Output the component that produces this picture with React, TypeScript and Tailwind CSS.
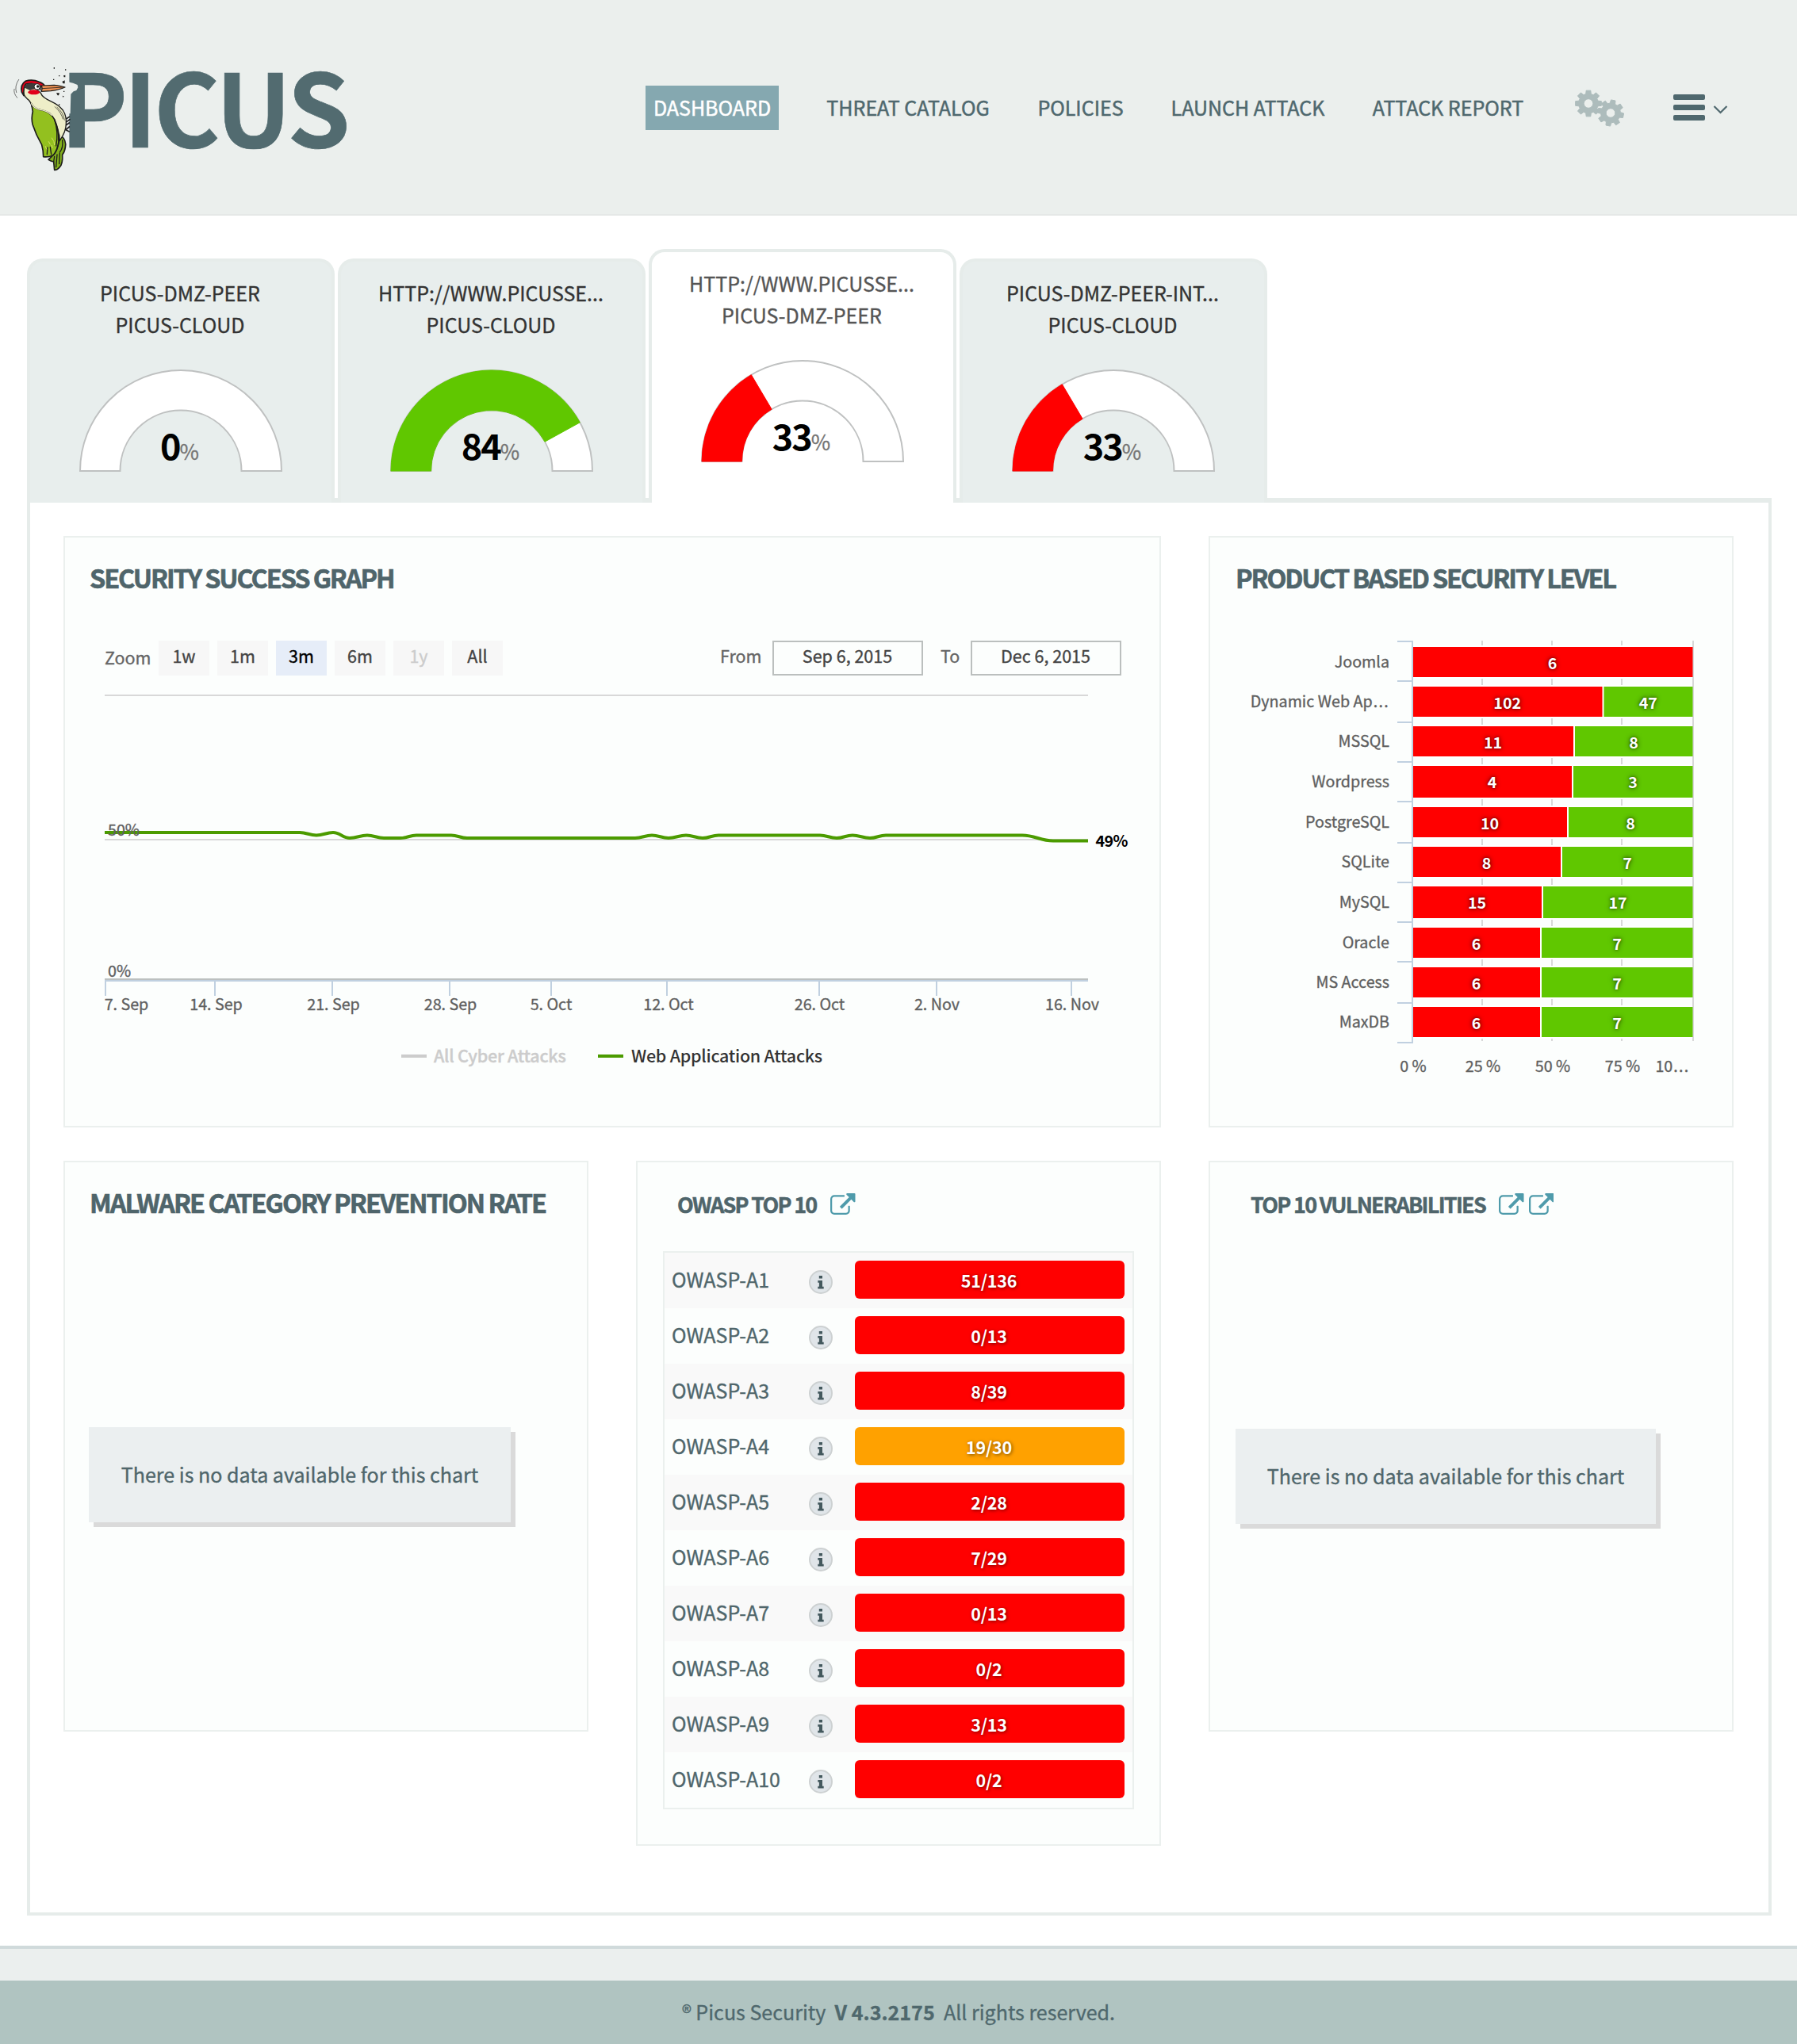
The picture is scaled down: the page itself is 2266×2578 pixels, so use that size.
import React from "react";

const FONT = "font-['Noto_Sans_CJK_SC','Noto_Sans',sans-serif]";

/* ---------- Logo ---------- */

function Logo() {
  return (
    <svg className="mt-[60px] h-[220px] w-[460px] shrink-0 overflow-visible" viewBox="0 0 1380 660">
      <text
        x="229 468 582 816 1087"
        y="378"
        fontSize="382"
        fontWeight="700"
        fill="#526b70"
        stroke="#526b70"
        strokeWidth="2"
      >
        PICUS
      </text>
      {/* bite taken out of the P */}
      <path d="M255 128 L266 132 L276 134 L293 141 L295 151 L289 162 L278 166 L268 176 L266 250 L255 250Z" fill="#ebefed" />
      <g strokeLinecap="round" strokeLinejoin="round">
        {/* motion lines */}
        <path d="M71 121 Q54 145 62 170 M54 157 Q50 172 65 190" fill="none" stroke="#333" strokeWidth="2" />
        {/* claws */}
        <path d="M250 270 L262 262 M248 284 L264 272 M240 300 L262 285 M236 296 L250 310 L262 300 M246 310 L262 318" fill="none" stroke="#1d1d1b" strokeWidth="5" />
        {/* tail */}
        <path d="M232 335 Q252 350 247 378 Q244 396 236 405 Q238 440 226 452 Q216 464 206 463 L203 432 Q192 430 183 424 Q196 414 204 402Z" fill="#82b01c" stroke="#1d1d1b" strokeWidth="5" />
        <path d="M216 405 L212 452 M226 400 L224 440 M236 350 Q240 380 226 396 M203 432 L206 412" fill="none" stroke="#1d1d1b" strokeWidth="4" />
        {/* belly and neck */}
        <path d="M88 150 Q84 178 102 193 Q117 203 121 225 L150 236 Q190 242 205 275 Q222 305 226 352 Q250 318 250 288 Q252 258 238 237 Q222 217 196 205 Q160 190 154 172 L130 150Z" fill="#eeeec8" stroke="#1d1d1b" strokeWidth="4" />
        <path d="M216 226 Q240 246 244 274 M208 224 Q232 246 238 270" fill="none" stroke="#1d1d1b" strokeWidth="2" />
        {/* wing */}
        <path d="M119 212 Q128 230 150 235 Q190 240 206 272 Q222 308 222 356 Q216 395 200 408 Q182 416 164 413 Q164 388 158 368 Q136 330 123 290 Q118 265 124 242Z" fill="#93c01f" stroke="#1d1d1b" strokeWidth="5" />
        <path d="M119 212 Q128 230 150 235 Q178 238 196 256" fill="none" stroke="#eeeec8" strokeWidth="4" />
        <path d="M206 272 Q222 320 212 372 M224 330 Q226 372 206 402 M180 378 L178 404 M190 376 L194 404" fill="none" stroke="#1d1d1b" strokeWidth="4" />
        <path d="M196 342 L202 352 M184 356 L190 366 M204 356 L206 368 M172 374 L176 384 M196 370 L198 380" fill="none" stroke="#d8e26a" strokeWidth="3" />
        {/* head */}
        <path d="M82 168 Q76 140 96 127 Q122 118 148 130 Q164 136 168 143 L154 150 L120 136 L98 138 Q88 150 90 182Z" fill="#e2001a" stroke="#1d1d1b" strokeWidth="5" />
        <path d="M90 150 Q96 138 112 136 Q136 132 154 142 L156 162 Q130 152 114 162 Q100 156 90 150Z" fill="#3c3c3b" />
        <ellipse cx="128" cy="169" rx="22" ry="9" fill="#e2001a" />
        <circle cx="140" cy="148" r="11" fill="#fff" stroke="#1d1d1b" strokeWidth="3" />
        <circle cx="143" cy="147" r="5" fill="#1d1d1b" />
        {/* beak */}
        <path d="M157 144 L205 142 Q232 145 246 150 Q225 160 192 164 L156 166 Q162 155 157 144Z" fill="#f39455" stroke="#1d1d1b" strokeWidth="3.5" />
        <path d="M158 155 L240 150" stroke="#1d1d1b" strokeWidth="2.5" />
      </g>
      {/* splinters */}
      <path d="M203 75h4v5h-4zM246 82h4v4h-4zM222 105h4v4h-4zM240 106l7-2v8h-5zM201 119h4v4h-4zM235 129l10-5v12h-6zM240 164h4v4h-4zM213 172h12l-3 9h-4zM236 182l6 2-3 5zM222 214h4v4h-4z" fill="#1d1d1b" />
    </svg>
  );
}

/* ---------- Header ---------- */

function gearPath(cx: number, cy: number, turn: number) {
  const teeth = 8;
  const outer = 16.6;
  const inner = 12.4;
  const pts: string[] = [];
  for (let i = 0; i < teeth; i++) {
    const a = turn + (i * 2 * Math.PI) / teeth;
    const at = (r: number, d: number) =>
      `${(cx + r * Math.cos(a + d)).toFixed(2)} ${(cy + r * Math.sin(a + d)).toFixed(2)}`;
    pts.push(at(inner, -0.27), at(outer, -0.17), at(outer, 0.17), at(inner, 0.27));
  }
  const r = 5.8;
  return `M${pts.join("L")}Z M${cx - r} ${cy}a${r} ${r} 0 1 0 ${2 * r} 0a${r} ${r} 0 1 0 ${-2 * r} 0Z`;
}

function Cogs() {
  return (
    <svg className="ml-[54px] h-[50px] w-[64px]" viewBox="0 0 64 50">
      <path d={gearPath(17, 19.5, 0)} fill="#adbcbc" fillRule="evenodd" stroke="#adbcbc" strokeWidth="1" strokeLinejoin="round" />
      <path d={gearPath(45, 31.5, 0.2)} fill="#adbcbc" fillRule="evenodd" stroke="#adbcbc" strokeWidth="1" strokeLinejoin="round" />
    </svg>
  );
}

function Header() {
  return (
    <header className="flex h-[272px] border-b-2 border-[#e5e8e7] bg-[#ebefed]">
      <Logo />
      <nav className="mt-[108px] ml-[354px] flex h-[56px] items-start text-[25px] leading-[54px] whitespace-nowrap text-[#4f686e] [-webkit-text-stroke:0.5px]">
        <a className="mr-[49px] h-[56px] w-[168px] bg-[#85a8b0] text-center text-white">DASHBOARD</a>
        <a className="mr-10 w-[227px] pl-px text-center">THREAT CATALOG</a>
        <a className="mr-10 w-[129px] text-center">POLICIES</a>
        <a className="mr-10 w-[213px] text-center">LAUNCH ATTACK</a>
        <a className="w-[212px] text-center">ATTACK REPORT</a>
        <div className="flex h-[56px] items-center">
          <Cogs />
          <svg className="ml-[60px] h-[36px] w-[70px]" viewBox="0 0 70 36">
            <g fill="#4f686e">
              <rect x="0" y="1" width="40" height="7" rx="2" />
              <rect x="0" y="14" width="40" height="7" rx="2" />
              <rect x="0" y="27" width="40" height="7" rx="2" />
            </g>
            <path d="M51.5 16 L59.5 24 L67.5 16" fill="none" stroke="#4f686e" strokeWidth="2.2" />
          </svg>
        </div>
      </nav>
    </header>
  );
}

/* ---------- Peer tabs ---------- */

function ring(value: number) {
  const R = 127;
  const r = 76.5;
  const a = Math.PI * (1 - value / 100);
  const p = (q: number) => `${(130 + q * Math.cos(a)).toFixed(2)} ${(129 - q * Math.sin(a)).toFixed(2)}`;
  return `M3 129 A${R} ${R} 0 0 1 ${p(R)} L${p(r)} A${r} ${r} 0 0 0 53.5 129Z`;
}

function Gauge({ value, color }: { value: number; color: string }) {
  return (
    <svg className="mt-9 h-[132px] w-[260px]" viewBox="0 0 260 132">
      <path d={ring(100)} fill="#fff" stroke="#bfc1c1" strokeWidth="2" />
      {value > 0 && <path d={ring(value)} fill={color} stroke={color} strokeWidth="1" />}
      <text x="128.5" y="115" textAnchor="middle" fontWeight="700" fontSize="45" letterSpacing="-2" fill="#000">
        {value}
        <tspan fontWeight="400" fontSize="26.5" letterSpacing="0" fill="#757575" stroke="#757575" strokeWidth="0.3">
          %
        </tspan>
      </text>
    </svg>
  );
}

const peers = [
  { top: "PICUS-DMZ-PEER", bottom: "PICUS-CLOUD", value: 0, color: "#fff", active: false },
  { top: "HTTP://WWW.PICUSSE...", bottom: "PICUS-CLOUD", value: 84, color: "#60c700", active: false },
  { top: "HTTP://WWW.PICUSSE...", bottom: "PICUS-DMZ-PEER", value: 33, color: "#ff0000", active: true },
  { top: "PICUS-DMZ-PEER-INT...", bottom: "PICUS-CLOUD", value: 33, color: "#ff0000", active: false },
];

function Tabs() {
  return (
    <div className="relative z-10 -mb-[6px] flex h-[320px] items-end gap-1">
      {peers.map((p, i) => (
        <div
          key={i}
          className={
            "flex w-[388px] flex-col items-center rounded-t-[20px] border-x-4 border-t-4 border-[#e6ecea] pt-[19px] text-[25px] leading-[40px] whitespace-nowrap " +
            (p.active ? "h-[320px] bg-white text-[#555]" : "h-[308px] bg-[#e8eeed] text-[#333]")
          }
        >
          <span className="pr-[2px]">{p.top}</span>
          <span className="pr-[2px]">{p.bottom}</span>
          <Gauge value={p.value} color={p.color} />
        </div>
      ))}
    </div>
  );
}

/* ---------- Shared ---------- */

const panel = "border-2 border-[#ebf0ee] bg-[#fcfefd]";

function BigTitle({ children, className }: { children: React.ReactNode; className: string }) {
  return (
    <h2 className={"mt-[30px] ml-[31px] text-[32.5px] leading-[40px] font-bold whitespace-nowrap text-[#4f656b] [-webkit-text-stroke:0.6px] " + className}>
      {children}
    </h2>
  );
}

function ExternalLink() {
  return (
    <svg className="h-[27px] w-[31.5px]" viewBox="0 0 1792 1536">
      <path
        fill="#4f9bab"
        d="M1408 928v320q0 119-84.5 203.5t-203.5 84.5h-832q-119 0-203.5-84.5t-84.5-203.5v-832q0-119 84.5-203.5t203.5-84.5h704q14 0 23 9t9 23v64q0 14-9 23t-23 9h-704q-66 0-113 47t-47 113v832q0 66 47 113t113 47h832q66 0 113-47t47-113v-320q0-14 9-23t23-9h64q14 0 23 9t9 23zm384-864v512q0 26-19 45t-45 19-45-19l-176-176-652 652q-10 10-23 10t-23-10l-114-114q-10-10-10-23t10-23l652-652-176-176q-19-19-19-45t19-45 45-19h512q26 0 45 19t19 45z"
      />
    </svg>
  );
}

function NoData({ className }: { className: string }) {
  return (
    <div className={"h-[120px] bg-[#ebeff0] text-center text-[25.05px] leading-[118px] whitespace-nowrap text-[#4f666b] shadow-[6px_6px_0_#dadada] " + className}>
      There is no data available for this chart
    </div>
  );
}

/* ---------- Success graph ---------- */

const ranges = [
  { label: "1w", cls: "bg-[#f7f7f7] text-[#444]" },
  { label: "1m", cls: "bg-[#f7f7f7] text-[#444]" },
  { label: "3m", cls: "bg-[#e6edf8] text-black" },
  { label: "6m", cls: "bg-[#f7f7f7] text-[#444]" },
  { label: "1y", cls: "bg-[#f7f7f7] text-[#ccc]" },
  { label: "All", cls: "bg-[#f7f7f7] text-[#444]" },
];

const ticks: [number, string, number][] = [
  [133, "7. Sep", 159.5],
  [271, "14. Sep", 272.5],
  [419, "21. Sep", 420.5],
  [567, "28. Sep", 568],
  [695, "5. Oct", 695],
  [841, "12. Oct", 843],
  [1033, "26. Oct", 1033.5],
  [1181, "2. Nov", 1181.5],
  [1351, "16. Nov", 1352],
];

const curve: [number, number][] = [
  [132, 1050], [378, 1050], [399, 1053.5], [420, 1050], [441, 1057], [463, 1053.5], [484, 1057], [505, 1057],
  [525, 1053.5], [569, 1053.5], [589, 1057], [801, 1057], [822, 1053.5], [843, 1057], [865, 1053.5], [886, 1057],
  [906, 1053.5], [1034, 1053.5], [1055, 1057], [1075, 1053.5], [1097, 1057], [1117, 1053.5], [1289, 1053.5],
  [1328, 1060.5], [1372, 1060.5],
];

function curvePath() {
  let d = `M${curve[0][0]} ${curve[0][1]}`;
  for (let i = 1; i < curve.length; i++) {
    const [x0, y0] = curve[i - 1];
    const [x1, y1] = curve[i];
    const k = (x1 - x0) * 0.42;
    d += `C${x0 + k} ${y0} ${x1 - k} ${y1} ${x1} ${y1}`;
  }
  return d;
}

function SuccessGraph() {
  return (
    <section className={"col-span-2 h-[746px] " + panel}>
      <BigTitle className="h-[100px] tracking-[-2.1px]">SECURITY SUCCESS GRAPH</BigTitle>
      <div className="flex h-[44px] pl-[50px] text-[21.5px] leading-[38px] whitespace-nowrap">
        <span className="w-[68px] pt-[2px] text-[#666]">Zoom</span>
        <div className="flex gap-[10px]">
          {ranges.map((r) => (
            <span key={r.label} className={"h-[44px] w-[64px] text-center " + r.cls}>
              {r.label}
            </span>
          ))}
        </div>
        <span className="ml-[274px] w-[66px] text-[#666]">From</span>
        <span className="h-[44px] w-[190px] border-2 border-[#bbbfbe] pr-px text-center leading-[34px] text-[#444]">Sep 6, 2015</span>
        <span className="ml-[22px] w-[38px] text-[#666]">To</span>
        <span className="h-[44px] w-[190px] border-2 border-[#bbbfbe] pr-px text-center leading-[34px] text-[#444]">Dec 6, 2015</span>
      </div>
      <svg className="h-[568px] w-[1380px]" viewBox="82 852 1380 568">
        <g fill="#d8d8d8">
          <rect x="132" y="876" width="1240" height="2" />
          <rect x="132" y="1058" width="1240" height="2" />
        </g>
        <rect x="132" y="1234" width="1240" height="2" fill="#bcc0c0" />
        <rect x="132" y="1236" width="1240" height="2" fill="#c0d0e0" />
        <path d={curvePath()} fill="none" stroke="#4b9b00" strokeWidth="4" />
        {ticks.map(([x]) => (
          <rect key={x} x={x - 1} y="1238" width="2" height="18" fill="#c0d0e0" />
        ))}
        <g fontSize="19.7" fill="#606060" stroke="#606060" strokeWidth="0.35">
          {ticks.map(([, label, cx]) => (
            <text key={label} x={cx} y="1273.5" textAnchor="middle">
              {label}
            </text>
          ))}
          <text x="136" y="1054">50%</text>
          <text x="136" y="1231.5">0%</text>
        </g>
        <text x="1381.5" y="1067.8" fontSize="19.7" fontWeight="700" letterSpacing="-0.6" fill="#000">
          49%
        </text>
        <rect x="506" y="1330" width="32" height="4" fill="#ccc" />
        <rect x="754" y="1330" width="32" height="4" fill="#4b9b00" />
        <text x="547" y="1340" fontSize="21.5" fontWeight="500" letterSpacing="-0.25" fill="#ccc" stroke="#ccc" strokeWidth="0.4">
          All Cyber Attacks
        </text>
        <text x="796" y="1340" fontSize="21.5" fontWeight="500" letterSpacing="-0.27" fill="#333">
          Web Application Attacks
        </text>
      </svg>
    </section>
  );
}

/* ---------- Product based level ---------- */

const products = [
  { name: "Joomla", cut: false, bad: 6, good: 0, y: 816, h: 38, split: 2135 },
  { name: "Dynamic Web Ap", cut: true, bad: 102, good: 47, y: 866, h: 38, split: 2021.5 },
  { name: "MSSQL", cut: false, bad: 11, good: 8, y: 916, h: 38, split: 1985 },
  { name: "Wordpress", cut: false, bad: 4, good: 3, y: 966, h: 40, split: 1983 },
  { name: "PostgreSQL", cut: false, bad: 10, good: 8, y: 1018, h: 38, split: 1977 },
  { name: "SQLite", cut: false, bad: 8, good: 7, y: 1068, h: 38, split: 1969 },
  { name: "MySQL", cut: false, bad: 15, good: 17, y: 1118, h: 40, split: 1945 },
  { name: "Oracle", cut: false, bad: 6, good: 7, y: 1170, h: 38, split: 1943 },
  { name: "MS Access", cut: false, bad: 6, good: 7, y: 1220, h: 38, split: 1943 },
  { name: "MaxDB", cut: false, bad: 6, good: 7, y: 1270, h: 38, split: 1943 },
];

function Ellipsis() {
  return (
    <tspan dx="1" letterSpacing="1.3">
      ...
    </tspan>
  );
}

function ProductLevel() {
  return (
    <section className={"h-[746px] " + panel}>
      <BigTitle className="h-[100px] pl-px tracking-[-2.2px]">PRODUCT BASED SECURITY LEVEL</BigTitle>
      <svg className="h-[612px] w-[658px]" viewBox="1526 808 658 612">
        <g fill="#d8d8d8">
          <rect x="1868" y="808" width="2" height="505" />
          <rect x="1956" y="808" width="2" height="505" />
          <rect x="2044" y="808" width="2" height="505" />
          <rect x="2134" y="808" width="2" height="505" />
        </g>
        <g fill="#c0d0e0">
          <rect x="1780" y="808" width="2" height="508" />
          {[808, 858, 910, 960, 1010, 1062, 1112, 1162, 1212, 1264, 1314].map((y) => (
            <rect key={y} x="1762" y={y} width="18" height="2" />
          ))}
        </g>
        {products.map((p) => {
          const shift = p.h === 40 ? 1 : 0;
          return (
            <g key={p.name}>
              <rect x="1782" y={p.y - 2} width="352" height={p.h + 4} fill="#fff" />
              <rect x="1782" y={p.y} width={p.split - 1782 - (p.good ? 1 : 0.5)} height={p.h} fill="#ff0000" />
              {p.good > 0 && <rect x={p.split + 1} y={p.y} width={2133.5 - p.split} height={p.h} fill="#60c700" />}
              <text x="1752" y={p.y + 26 + shift} textAnchor="end" fontSize="19.7" fill="#606060" stroke="#606060" strokeWidth="0.35">
                {p.name}
                {p.cut && <Ellipsis />}
              </text>
              <g fontSize="19.7" fontWeight="700" fill="#fff" textAnchor="middle" className="[text-shadow:0_0_6px_#000a,0_0_3px_#0006]">
                <text x={(1780 + p.split) / 2} y={p.y + 27.7 + shift / 2}>
                  {p.bad}
                </text>
                {p.good > 0 && (
                  <text x={(2135 + p.split) / 2} y={p.y + 27.7 + shift / 2}>
                    {p.good}
                  </text>
                )}
              </g>
            </g>
          );
        })}
        <g fontSize="19.7" fill="#606060" stroke="#606060" strokeWidth="0.35" textAnchor="middle">
          <text x="1782" y="1352">0 %</text>
          <text x="1870" y="1352">25 %</text>
          <text x="1958" y="1352">50 %</text>
          <text x="2046" y="1352">75 %</text>
          <text x="2109" y="1352">
            10
            <Ellipsis />
          </text>
        </g>
      </svg>
    </section>
  );
}

/* ---------- OWASP ---------- */

const owasp = ["51/136", "0/13", "8/39", "19/30", "2/28", "7/29", "0/13", "0/2", "3/13", "0/2"];

function SmallTitle({ children }: { children: React.ReactNode }) {
  return (
    <h3 className="text-[27px] leading-[41px] font-bold tracking-[-1.75px] whitespace-nowrap text-[#4f656b] [-webkit-text-stroke:0.5px]">
      {children}
    </h3>
  );
}

function Owasp() {
  return (
    <section className={"h-[864px] " + panel}>
      <div className="mt-8 ml-[49px] flex h-[80px] items-start">
        <div className="w-[194px] pl-px">
          <SmallTitle>OWASP TOP 10</SmallTitle>
        </div>
        <div className="mt-[7px]">
          <ExternalLink />
        </div>
      </div>
      <div className="ml-8 w-[594px] border-2 border-[#ebf0ee]">
        {owasp.map((v, i) => (
          <div key={i} className={"flex h-[70px] pt-[10px] pl-[9px] " + (i % 2 ? "" : "bg-[#f9f9f9]")}>
            <span className="w-[173px] text-[25px] leading-[46px] text-[#4f666b]">OWASP-A{i + 1}</span>
            <span className="mt-3 flex size-[30px] items-center justify-center rounded-full border-2 border-[#cdd1d2] bg-[#e0e5e9]">
              <svg className="h-[17px] w-[8px]" viewBox="0 0 8 17">
                <path d="M1.8 0h4.2v3.6H1.8zM0.3 6h5.7v7.8h1.7v2.7H0.3v-2.7h1.6V8.7H0.3z" fill="#44595e" />
              </svg>
            </span>
            <span
              className={
                "ml-7 h-[48px] w-[340px] rounded-[6px] pr-[2px] text-center text-[21.5px] leading-[49px] font-bold tracking-[-0.2px] text-white [-webkit-text-stroke:0] [text-shadow:1px_1px_4px_#0008] " +
                (v === "19/30" ? "bg-[#ffa100]" : "bg-[#ff0000]")
              }
            >
              {v}
            </span>
          </div>
        ))}
      </div>
    </section>
  );
}

/* ---------- Page ---------- */

export default function App() {
  return (
    <div lang="en" className={"w-[2266px] bg-white [-webkit-text-stroke:0.35px] " + FONT}>
      <Header />
      <main className="mt-[42px] ml-[34px] w-[2200px]">
        <Tabs />
        <div className="grid h-[1788px] grid-cols-[662px_662px_662px] content-start items-start gap-x-[60px] gap-y-[42px] border-4 border-t-[6px] border-[#e6ecea] p-[42px]">
          <SuccessGraph />
          <ProductLevel />
          <section className={"h-[720px] " + panel}>
            <BigTitle className="h-[304px] tracking-[-1.97px]">MALWARE CATEGORY PREVENTION RATE</BigTitle>
            <NoData className="ml-[30px] w-[532px]" />
          </section>
          <Owasp />
          <section className={"h-[720px] " + panel}>
            <div className="mt-8 ml-[50px] flex h-[304px] items-start">
              <div className="w-[314px] pl-px">
                <SmallTitle>TOP 10 VULNERABILITIES</SmallTitle>
              </div>
              <div className="mt-[7px] flex gap-[6px]">
                <ExternalLink />
                <ExternalLink />
              </div>
            </div>
            <NoData className="ml-8 w-[530px]" />
          </section>
        </div>
      </main>
      <footer className="mt-[38px] border-t-4 border-[#d0dadb] bg-[#ebefee] pt-10">
        <div className="h-[80px] bg-[#b0c4c1] text-center text-[25.05px] leading-[78px] whitespace-pre text-[#4f686d]">
          ® Picus Security{"  "}
          <b>V 4.3.2175</b>
          {"  "}All rights reserved.
        </div>
      </footer>
    </div>
  );
}
